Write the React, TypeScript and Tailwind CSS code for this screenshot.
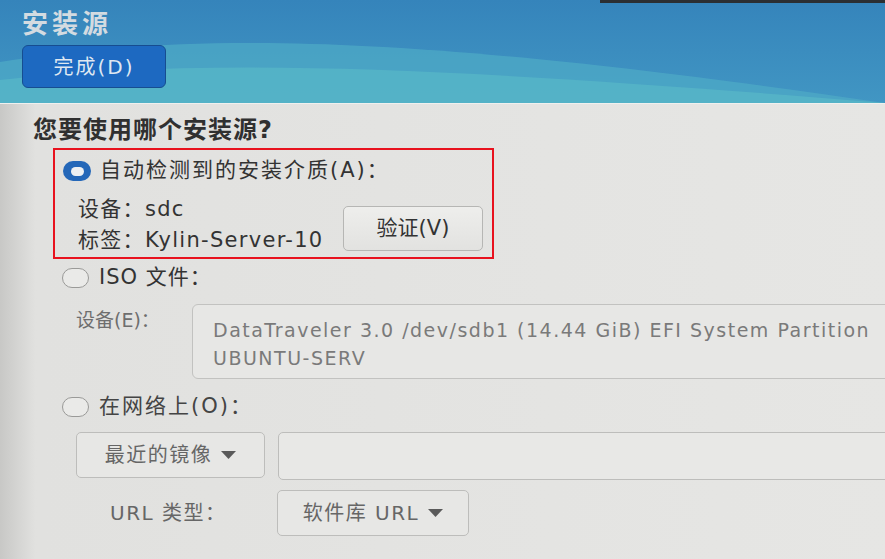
import React from "react";

const font = { fontFamily: '"DejaVu Sans", "Noto Sans CJK SC", sans-serif' };

function Radio({ checked }: { checked?: boolean }) {
  if (checked) {
    return (
      <span className="inline-flex h-[20px] w-[28px] shrink-0 items-center justify-center rounded-full bg-[#2467b8]">
        <span className="h-[9px] w-[13px] rounded-full bg-[#eef0f2]" />
      </span>
    );
  }
  return (
    <span className="inline-block h-[20px] w-[27px] shrink-0 rounded-full border-[1.5px] border-[#9a9a98] bg-[#eaeae8]" />
  );
}

function Caret() {
  return (
    <svg width="15" height="8" viewBox="0 0 15 8" className="ml-[9px] shrink-0">
      <path d="M0 0 H15 L7.5 8 Z" fill="#5a5a5a" />
    </svg>
  );
}

function Dropdown({ label, width }: { label: string; width: string }) {
  return (
    <div
      className={`flex h-[46px] ${width} items-center justify-center rounded-[5px] border border-[#bdbdbb] bg-[#e7e7e5] text-[20px] tracking-[1.5px] text-[#666]`}
    >
      <span>{label}</span>
      <Caret />
    </div>
  );
}

export default function App() {
  return (
    <div className="h-[559px] w-[885px] overflow-hidden" style={font}>
      {/* header band */}
      <div className="relative h-[103px] overflow-hidden bg-[#3a8cbf]">
        <svg className="absolute inset-0" width="885" height="103" viewBox="0 0 885 103" preserveAspectRatio="none">
          <defs>
            <linearGradient id="hd" x1="0" y1="0" x2="0" y2="1">
              <stop offset="0" stopColor="#3584bb" />
              <stop offset="1" stopColor="#4196c3" />
            </linearGradient>
          </defs>
          <rect width="885" height="103" fill="url(#hd)" />
          <path d="M0 62 C 200 30, 420 35, 885 103 L0 103 Z" fill="#4daac6" opacity="0.75" />
          <path d="M0 80 C 220 55, 480 70, 885 103 L0 103 Z" fill="#58b8c8" opacity="0.7" />
          <rect x="600" y="0" width="285" height="3" fill="#2b2f33" />
        </svg>
        <div className="relative flex flex-col pl-[22px] pt-[8px]">
          <div className="text-[26px] font-bold leading-[32px] tracking-[4px] text-[#d3dbe1]">安装源</div>
          <button className="mt-[5px] flex h-[43px] w-[144px] items-center justify-center rounded-[6px] border border-[#164d91] bg-[#1d69c1] text-[20px] tracking-[2px] text-[#dfe7f1]">
            完成(D)
          </button>
        </div>
      </div>
      <div className="h-px bg-[#f0f0ee]" />

      {/* body */}
      <div className="h-[455px] bg-linear-to-r from-[#c8c8c6] via-[#e1e1df] via-4% to-[#e6e6e4] pl-[33px] pt-[11px]">
        <div className="text-[24px] font-bold leading-[30px] tracking-[1px] text-[#303030]">您要使用哪个安装源?</div>

        {/* auto detected */}
        <div className="ml-[20px] mt-[3px] h-[111px] w-[441px] border-2 border-[#e8121e] pl-[8px] pt-[8px]">
          <div className="flex h-[26px] items-center">
            <Radio checked />
            <span className="ml-[9px] text-[21px] tracking-[2px] text-[#333]">自动检测到的安装介质(A)：</span>
          </div>
          <div className="mt-[10px] flex pl-[15px]">
            <div className="w-[265px] text-[21px] leading-[31px] tracking-[1.3px] text-[#333]">
              <div>设备：sdc</div>
              <div>标签：Kylin-Server-10</div>
            </div>
            <button className="mt-[12px] flex h-[45px] w-[140px] items-center justify-center rounded-[5px] border border-[#b6b6b4] bg-linear-to-b from-[#eeeeec] to-[#e2e2e0] text-[21px] text-[#333]">
              验证(V)
            </button>
          </div>
        </div>

        {/* iso */}
        <div className="ml-[29px] mt-[6px] flex h-[26px] items-center">
          <Radio />
          <span className="ml-[10px] text-[21px] tracking-[1px] text-[#333]">ISO 文件：</span>
        </div>
        <div className="mt-[13px] flex">
          <div className="ml-[43px] mt-[3px] w-[116px] text-[19px] leading-[26px] text-[#6e6e6e]">设备(E)：</div>
          <div className="-mr-[20px] h-[75px] flex-1 rounded-[6px] border border-[#c2c2c0] bg-[#e7e7e5] pl-[20px] pt-[11px] text-[19px] leading-[28px] tracking-[1.5px] text-[#7a7a7a]">
            <div className="whitespace-nowrap">DataTraveler 3.0 /dev/sdb1 (14.44 GiB) EFI System Partition</div>
            <div>UBUNTU-SERV</div>
          </div>
        </div>

        {/* network */}
        <div className="ml-[29px] mt-[15px] flex h-[26px] items-center">
          <Radio />
          <span className="ml-[10px] text-[21px] tracking-[2px] text-[#444]">在网络上(O)：</span>
        </div>
        <div className="mt-[12px] flex items-start">
          <div className="ml-[43px]">
            <Dropdown label="最近的镜像" width="w-[189px]" />
          </div>
          <div className="-mr-[20px] ml-[13px] h-[48px] flex-1 rounded-[5px] border border-[#bdbdbb] bg-[#e8e8e6]" />
        </div>
        <div className="mt-[10px] flex items-center">
          <div className="ml-[77px] w-[167px] text-[20px] tracking-[1.5px] text-[#666]">URL 类型：</div>
          <Dropdown label="软件库 URL" width="w-[192px]" />
        </div>
      </div>
    </div>
  );
}
